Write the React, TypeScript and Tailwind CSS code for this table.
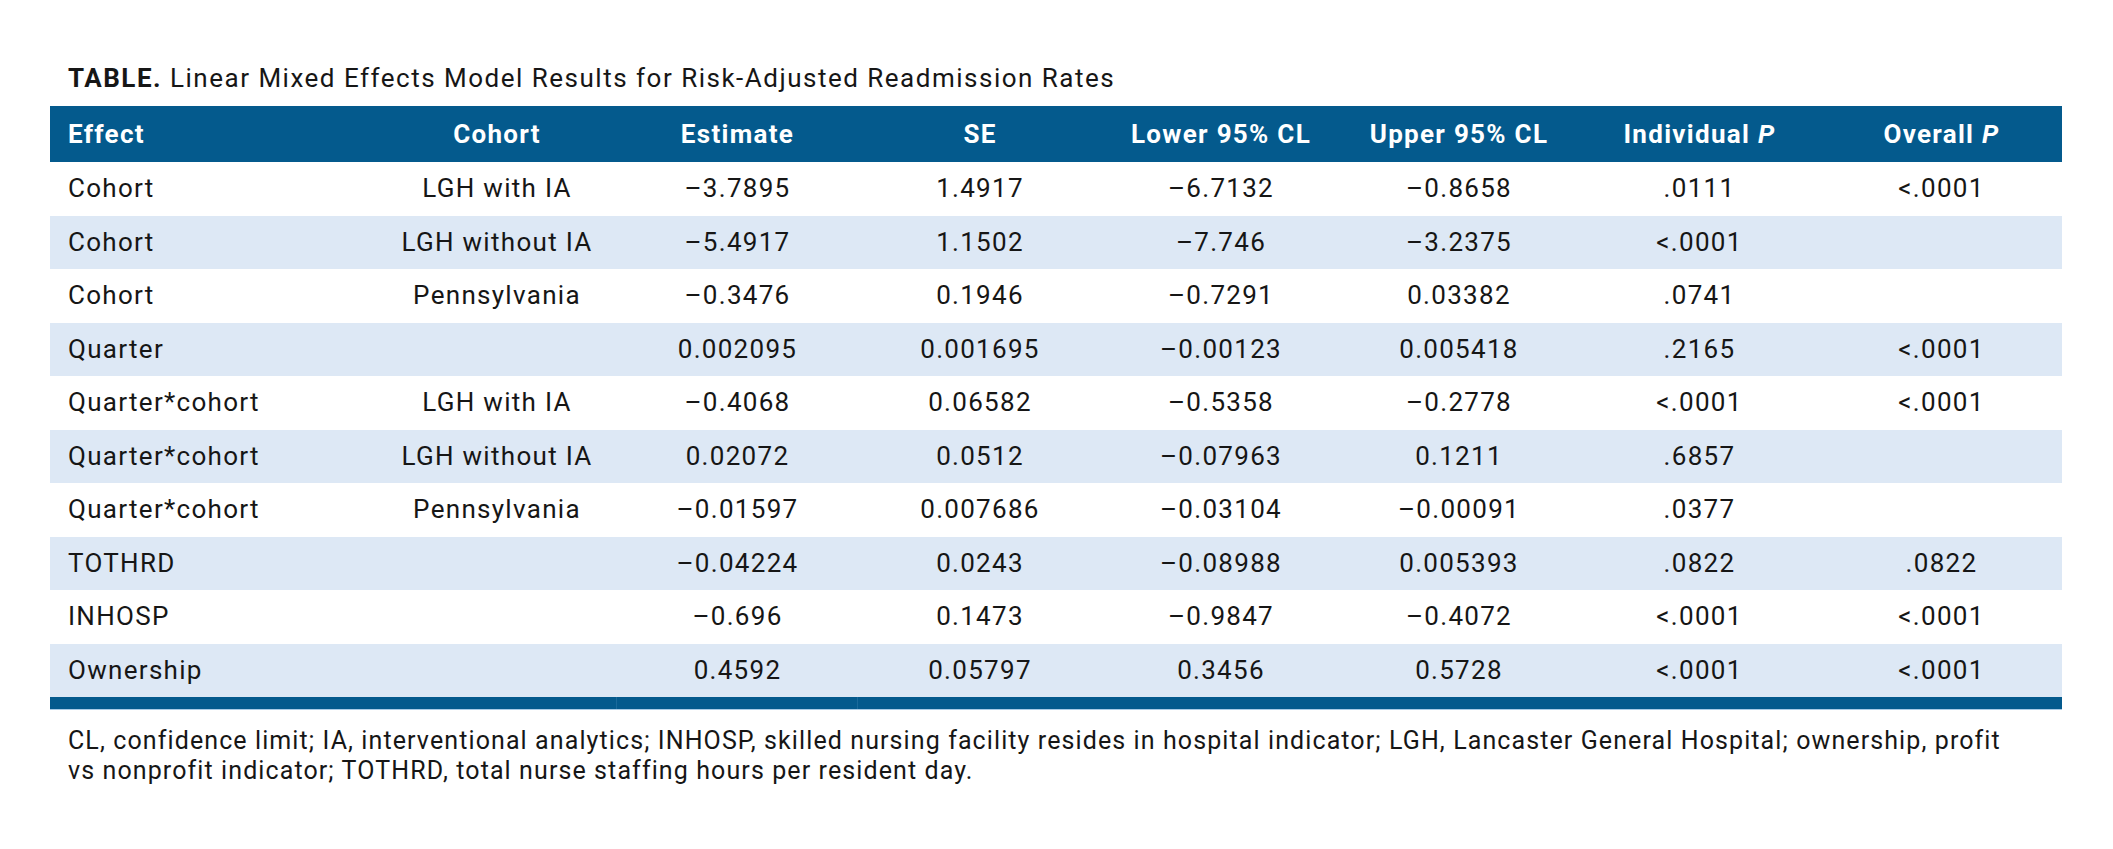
const rows: string[][] = [
  ["Cohort", "LGH with IA", "–3.7895", "1.4917", "–6.7132", "–0.8658", ".0111", "<.0001"],
  ["Cohort", "LGH without IA", "–5.4917", "1.1502", "–7.746", "–3.2375", "<.0001", ""],
  ["Cohort", "Pennsylvania", "–0.3476", "0.1946", "–0.7291", "0.03382", ".0741", ""],
  ["Quarter", "", "0.002095", "0.001695", "–0.00123", "0.005418", ".2165", "<.0001"],
  ["Quarter*cohort", "LGH with IA", "–0.4068", "0.06582", "–0.5358", "–0.2778", "<.0001", "<.0001"],
  ["Quarter*cohort", "LGH without IA", "0.02072", "0.0512", "–0.07963", "0.1211", ".6857", ""],
  ["Quarter*cohort", "Pennsylvania", "–0.01597", "0.007686", "–0.03104", "–0.00091", ".0377", ""],
  ["TOTHRD", "", "–0.04224", "0.0243", "–0.08988", "0.005393", ".0822", ".0822"],
  ["INHOSP", "", "–0.696", "0.1473", "–0.9847", "–0.4072", "<.0001", "<.0001"],
  ["Ownership", "", "0.4592", "0.05797", "0.3456", "0.5728", "<.0001", "<.0001"],
];

const grid = "grid grid-cols-[327px_240px_241px_244px_238px_238px_243px_241px]";

export default function App() {
  return (
    <div className="min-h-screen bg-white pl-[50px] pt-[62px] font-['Roboto','Liberation_Sans',sans-serif] text-[#161616]">
      <h1 className="mb-[12px] whitespace-nowrap pl-[18px] text-[26px] leading-[32px] tracking-[1.5px]">
        <span className="font-bold tracking-[1.5px]">TABLE.</span> Linear Mixed Effects Model Results for Risk-Adjusted Readmission Rates
      </h1>

      <div className="w-[2012px] tracking-[1.3px]">
        <div className={`${grid} h-[56px] items-center bg-[#045a8d] text-[26px] font-bold text-white`}>
          <div className="pl-[18px]">Effect</div>
          <div className="text-center">Cohort</div>
          <div className="text-center">Estimate</div>
          <div className="text-center">SE</div>
          <div className="text-center">Lower 95% CL</div>
          <div className="text-center">Upper 95% CL</div>
          <div className="text-center">
            Individual <i>P</i>
          </div>
          <div className="text-center">
            Overall <i>P</i>
          </div>
        </div>

        {rows.map((r, i) => (
          <div
            key={i}
            className={`${grid} h-[53.5px] items-center text-[26px] ${i % 2 === 1 ? "bg-[#dde8f5]" : "bg-white"}`}
          >
            {r.map((c, j) => (
              <div key={j} className={j === 0 ? "pl-[18px]" : "text-center"}>
                {c}
              </div>
            ))}
          </div>
        ))}

        <div className="grid h-[13px] grid-cols-[567px_241px_1204px] border-b border-[#a9cbe6] bg-[#045a8d]">
          <div className="border-r border-[#1a6a9b]" />
          <div className="border-r border-[#1a6a9b]" />
          <div />
        </div>
      </div>

      <p className="mt-[16px] whitespace-nowrap pl-[18px] text-[25px] leading-[30px] tracking-[1.1px]">
        CL, confidence limit; IA, interventional analytics; INHOSP, skilled nursing facility resides in hospital indicator; LGH, Lancaster General Hospital; ownership, profit
        <br />
        vs nonprofit indicator; TOTHRD, total nurse staffing hours per resident day.
      </p>
    </div>
  );
}
